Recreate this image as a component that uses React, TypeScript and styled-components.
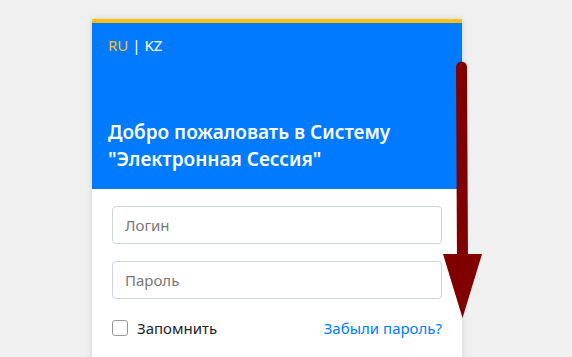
import styled, { createGlobalStyle } from "styled-components";

const GlobalStyle = createGlobalStyle`
  body {
    margin: 0;
    background: #f0f0f0;
    font-family: "Noto Sans", "Open Sans", sans-serif;
  }
`;

const Page = styled.div`
  position: relative;
  width: 572px;
  height: 357px;
  overflow: hidden;
  padding: 19px 0 0 92px;
  box-sizing: border-box;
`;

const Card = styled.div`
  width: 370px;
  background: #fff;
  box-shadow: 0 0 6px rgba(0, 0, 0, 0.12);
`;

const Header = styled.div`
  border-top: 4px solid #ffc107;
  background: #007bff;
  height: 170px;
  box-sizing: border-box;
  padding: 12px 16px 16px;
  display: flex;
  flex-direction: column;
  justify-content: space-between;
  color: #fff;
`;

const Lang = styled.div`
  font-size: 15px;
  line-height: 20px;
`;

const LangItem = styled.span<{ $active?: boolean }>`
  color: ${(p) => (p.$active ? "#ffc107" : "#fff")};
`;

const Sep = styled.span`
  margin: 0 4px;
`;

const Title = styled.h1`
  margin: 0;
  font-size: 19px;
  font-weight: 600;
  line-height: 27px;
`;

const Body = styled.form`
  padding: 17px 20px 30px;
  display: flex;
  flex-direction: column;
  gap: 17px;
`;

const Input = styled.input`
  height: 38px;
  box-sizing: border-box;
  border: 1px solid #ced4da;
  border-radius: 4px;
  padding: 6px 12px;
  font-family: inherit;
  font-size: 15px;
  color: #495057;
  &::placeholder {
    color: #777;
  }
`;

const Row = styled.div`
  display: flex;
  align-items: center;
  justify-content: space-between;
  font-size: 15px;
  margin-top: 2px;
`;

const Remember = styled.label`
  display: flex;
  align-items: center;
  gap: 9px;
  color: #212529;
`;

const Check = styled.span`
  width: 14px;
  height: 14px;
  border: 1px solid #999;
  border-radius: 3px;
  background: #fff;
`;

const Link = styled.a`
  color: #007bff;
  text-decoration: none;
`;

const Arrow = styled.svg`
  position: absolute;
  left: 440px;
  top: 58px;
`;

export default function App() {
  return (
    <>
      <GlobalStyle />
      <Page>
        <Card>
          <Header>
            <Lang>
              <LangItem $active>RU</LangItem>
              <Sep>|</Sep>
              <LangItem>KZ</LangItem>
            </Lang>
            <Title>
              Добро пожаловать в Систему
              <br />
              "Электронная Сессия"
            </Title>
          </Header>
          <Body>
            <Input placeholder="Логин" />
            <Input placeholder="Пароль" type="password" />
            <Row>
              <Remember>
                <Check />
                Запомнить
              </Remember>
              <Link href="#">Забыли пароль?</Link>
            </Row>
          </Body>
        </Card>
        <Arrow width="46" height="264" viewBox="0 0 46 264">
          <line x1="21.5" y1="9" x2="22.5" y2="205" stroke="#800000" strokeWidth="11" strokeLinecap="round" />
          <polygon points="3,196 42,196 22.5,260" fill="#800000" />
        </Arrow>
      </Page>
    </>
  );
}
